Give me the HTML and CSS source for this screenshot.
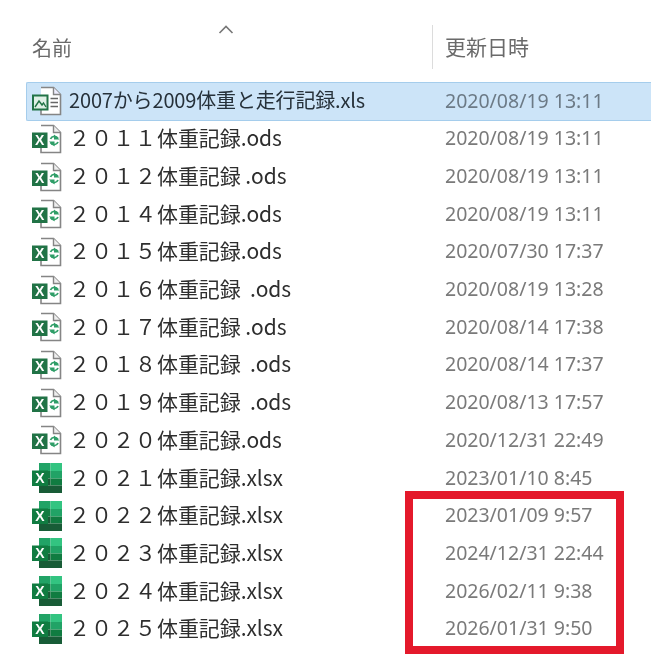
FILE: index.html
```html
<!DOCTYPE html>
<html lang="ja">
<head>
<meta charset="utf-8">
<title>体重記録</title>
<link rel="stylesheet" href="styles.css">
</head>
<body>
<svg class="defs" width="0" height="0" aria-hidden="true">
  <symbol id="i-ods" viewBox="0 0 30 30">
    <path d="M9 1.500H21.500L28.500 8.500V28.500H9V24" fill="#fff" stroke="#858585" stroke-width="1.600"/>
    <path d="M21.500 1.500V8.500H28.500" fill="#eee" stroke="#858585" stroke-width="1.400"/>
    <rect x="0" y="8.500" width="15.500" height="15.500" fill="#217346"/>
    <path d="M18.500 15a4.200 4.200 0 0 1 7.500-.5M26 18a4.200 4.200 0 0 1-7.500.5" fill="none" stroke="#2f9e68" stroke-width="1.800"/>
    <path d="M22 10.500l5.500 5-5.500 0zM22.500 22.500l-5.500-5 5.500 0z" fill="#2f9e68"/>
  </symbol>
  <symbol id="i-xls" viewBox="0 0 30 30">
    <path d="M9 1.500H21.500L28.500 8.500V28.500H9V24" fill="#fff" stroke="#858585" stroke-width="1.600"/>
    <path d="M21.500 1.500V8.500H28.500" fill="#eef" stroke="#858585" stroke-width="1.400"/>
    <rect x="1" y="9.500" width="14.500" height="14" fill="#dff0e6" stroke="#217346" stroke-width="2"/>
    <path d="M3 21l4-6 3 4 1.500-2 2.500 4" fill="none" stroke="#217346" stroke-width="1.400"/>
    <path d="M18.500 12.500h7.500M18.500 16.500h7.500M18.500 20.500h7.500" stroke="#666" stroke-width="1.400"/>
  </symbol>
  <symbol id="i-xlsx" viewBox="0 0 30 30">
    <rect x="7" y="0" width="11.500" height="8" fill="#21a366"/>
    <rect x="18.500" y="0" width="11.500" height="8" fill="#33c481"/>
    <rect x="7" y="8" width="11.500" height="7.500" fill="#107c41"/>
    <rect x="18.500" y="8" width="11.500" height="7.500" fill="#21a366"/>
    <rect x="7" y="15.500" width="11.500" height="7" fill="#185c37"/>
    <rect x="18.500" y="15.500" width="11.500" height="7" fill="#107c41"/>
    <rect x="7" y="22.500" width="23" height="7.500" fill="#185c37"/>
    <rect x="0" y="7.500" width="16" height="15.500" fill="#107c41"/>
  </symbol>
</svg>

<main class="explorer">
  <header class="columns">
    <div class="col-name">名前<span class="sort"><svg width="16" height="9" viewBox="0 0 16 9"><path d="M1.500 8L8 1.500 14.500 8" fill="none" stroke="#777" stroke-width="1.600"/></svg></span></div>
    <div class="col-date">更新日時</div>
  </header>
  <ul class="rows">
    <li class="row selected"><svg class="icon" viewBox="0 0 30 30"><use href="#i-xls"/></svg><span class="name first">2007から2009体重と走行記録.xls</span><span class="date">2020/08/19 13:11</span></li>
    <li class="row"><svg class="icon" viewBox="0 0 30 30"><use href="#i-ods"/><text class="x-mark" x="7.700" y="21.300">X</text></svg><span class="name"><span class="num">２０１１</span>体重記録.ods</span><span class="date">2020/08/19 13:11</span></li>
    <li class="row"><svg class="icon" viewBox="0 0 30 30"><use href="#i-ods"/><text class="x-mark" x="7.700" y="21.300">X</text></svg><span class="name"><span class="num">２０１２</span>体重記録 .ods</span><span class="date">2020/08/19 13:11</span></li>
    <li class="row"><svg class="icon" viewBox="0 0 30 30"><use href="#i-ods"/><text class="x-mark" x="7.700" y="21.300">X</text></svg><span class="name"><span class="num">２０１４</span>体重記録.ods</span><span class="date">2020/08/19 13:11</span></li>
    <li class="row"><svg class="icon" viewBox="0 0 30 30"><use href="#i-ods"/><text class="x-mark" x="7.700" y="21.300">X</text></svg><span class="name"><span class="num">２０１５</span>体重記録.ods</span><span class="date">2020/07/30 17:37</span></li>
    <li class="row"><svg class="icon" viewBox="0 0 30 30"><use href="#i-ods"/><text class="x-mark" x="7.700" y="21.300">X</text></svg><span class="name"><span class="num">２０１６</span>体重記録&nbsp; .ods</span><span class="date">2020/08/19 13:28</span></li>
    <li class="row"><svg class="icon" viewBox="0 0 30 30"><use href="#i-ods"/><text class="x-mark" x="7.700" y="21.300">X</text></svg><span class="name"><span class="num">２０１７</span>体重記録 .ods</span><span class="date">2020/08/14 17:38</span></li>
    <li class="row"><svg class="icon" viewBox="0 0 30 30"><use href="#i-ods"/><text class="x-mark" x="7.700" y="21.300">X</text></svg><span class="name"><span class="num">２０１８</span>体重記録&nbsp; .ods</span><span class="date">2020/08/14 17:37</span></li>
    <li class="row"><svg class="icon" viewBox="0 0 30 30"><use href="#i-ods"/><text class="x-mark" x="7.700" y="21.300">X</text></svg><span class="name"><span class="num">２０１９</span>体重記録&nbsp; .ods</span><span class="date">2020/08/13 17:57</span></li>
    <li class="row"><svg class="icon" viewBox="0 0 30 30"><use href="#i-ods"/><text class="x-mark" x="7.700" y="21.300">X</text></svg><span class="name"><span class="num">２０２０</span>体重記録.ods</span><span class="date">2020/12/31 22:49</span></li>
    <li class="row"><svg class="icon" viewBox="0 0 30 30"><use href="#i-xlsx"/><text class="x-mark" x="8" y="20.300">X</text></svg><span class="name"><span class="num">２０２１</span>体重記録.xlsx</span><span class="date">2023/01/10 8:45</span></li>
    <li class="row"><svg class="icon" viewBox="0 0 30 30"><use href="#i-xlsx"/><text class="x-mark" x="8" y="20.300">X</text></svg><span class="name"><span class="num">２０２２</span>体重記録.xlsx</span><span class="date">2023/01/09 9:57</span></li>
    <li class="row"><svg class="icon" viewBox="0 0 30 30"><use href="#i-xlsx"/><text class="x-mark" x="8" y="20.300">X</text></svg><span class="name"><span class="num">２０２３</span>体重記録.xlsx</span><span class="date">2024/12/31 22:44</span></li>
    <li class="row"><svg class="icon" viewBox="0 0 30 30"><use href="#i-xlsx"/><text class="x-mark" x="8" y="20.300">X</text></svg><span class="name"><span class="num">２０２４</span>体重記録.xlsx</span><span class="date">2026/02/11 9:38</span></li>
    <li class="row"><svg class="icon" viewBox="0 0 30 30"><use href="#i-xlsx"/><text class="x-mark" x="8" y="20.300">X</text></svg><span class="name"><span class="num">２０２５</span>体重記録.xlsx</span><span class="date">2026/01/31 9:50</span></li>
  </ul>
  <div class="highlight"></div>
</main>
</body>
</html>
```

FILE: styles.css
```css
* {
  box-sizing: border-box;
}

html,
body {
  margin: 0;
  padding: 0;
  background: #fff;
}

body {
  width: 651px;
  height: 669px;
  overflow: hidden;
  font-family: "Noto Sans CJK JP", "Noto Sans", sans-serif;
}

.defs {
  position: absolute;
}

.explorer {
  position: relative;
  width: 651px;
  height: 669px;
  padding-top: 25px;
  filter: blur(0.45px);
}

.columns {
  display: flex;
  height: 44px;
  margin-bottom: 13px;
  font-size: 20px;
  color: #6a6a6a;
}

.col-name {
  position: relative;
  width: 432px;
  padding-left: 32px;
  line-height: 45px;
}

.sort {
  position: absolute;
  left: 218px;
  top: 0;
  line-height: 0;
}

.col-date {
  flex: 1;
  padding-left: 12px;
  border-left: 1.500px solid #dcdcdc;
  line-height: 43px;
  font-size: 21px;
}

.rows {
  list-style: none;
  margin: 0;
  padding: 0 0 0 26px;
}

.row {
  display: flex;
  align-items: center;
  height: 37.700px;
  padding-left: 5px;
  border: 1px solid transparent;
  border-right: 0;
}

.selected {
  height: 38.500px;
  margin-bottom: -0.500px;
  background: #cce4f8;
  border-color: #a5cdec;
  border-radius: 2px 0 0 2px;
}

.icon {
  flex: none;
  width: 30px;
  height: 30px;
}

.x-mark {
  font-family: "Liberation Sans", sans-serif;
  font-weight: 700;
  font-size: 14px;
  fill: #fff;
  text-anchor: middle;
}

.name {
  width: 376px;
  margin-left: 7px;
  padding-bottom: 3px;
  font-size: 21px;
  letter-spacing: -0.080px;
  color: #2e2e2e;
  white-space: nowrap;
}

.num {
  letter-spacing: 1px;
}

.name.first {
  font-size: 20px;
  letter-spacing: -0.160px;
  color: #26313a;
}

.date {
  font-family: "Noto Sans", sans-serif;
  font-size: 19.500px;
  padding-bottom: 2px;
  color: #7a7a7a;
  white-space: nowrap;
}

.selected .date {
  color: #6c7a86;
}

.highlight {
  position: absolute;
  left: 405px;
  top: 491px;
  width: 219px;
  height: 163px;
  border: 8.500px solid #e4192b;
}
```
